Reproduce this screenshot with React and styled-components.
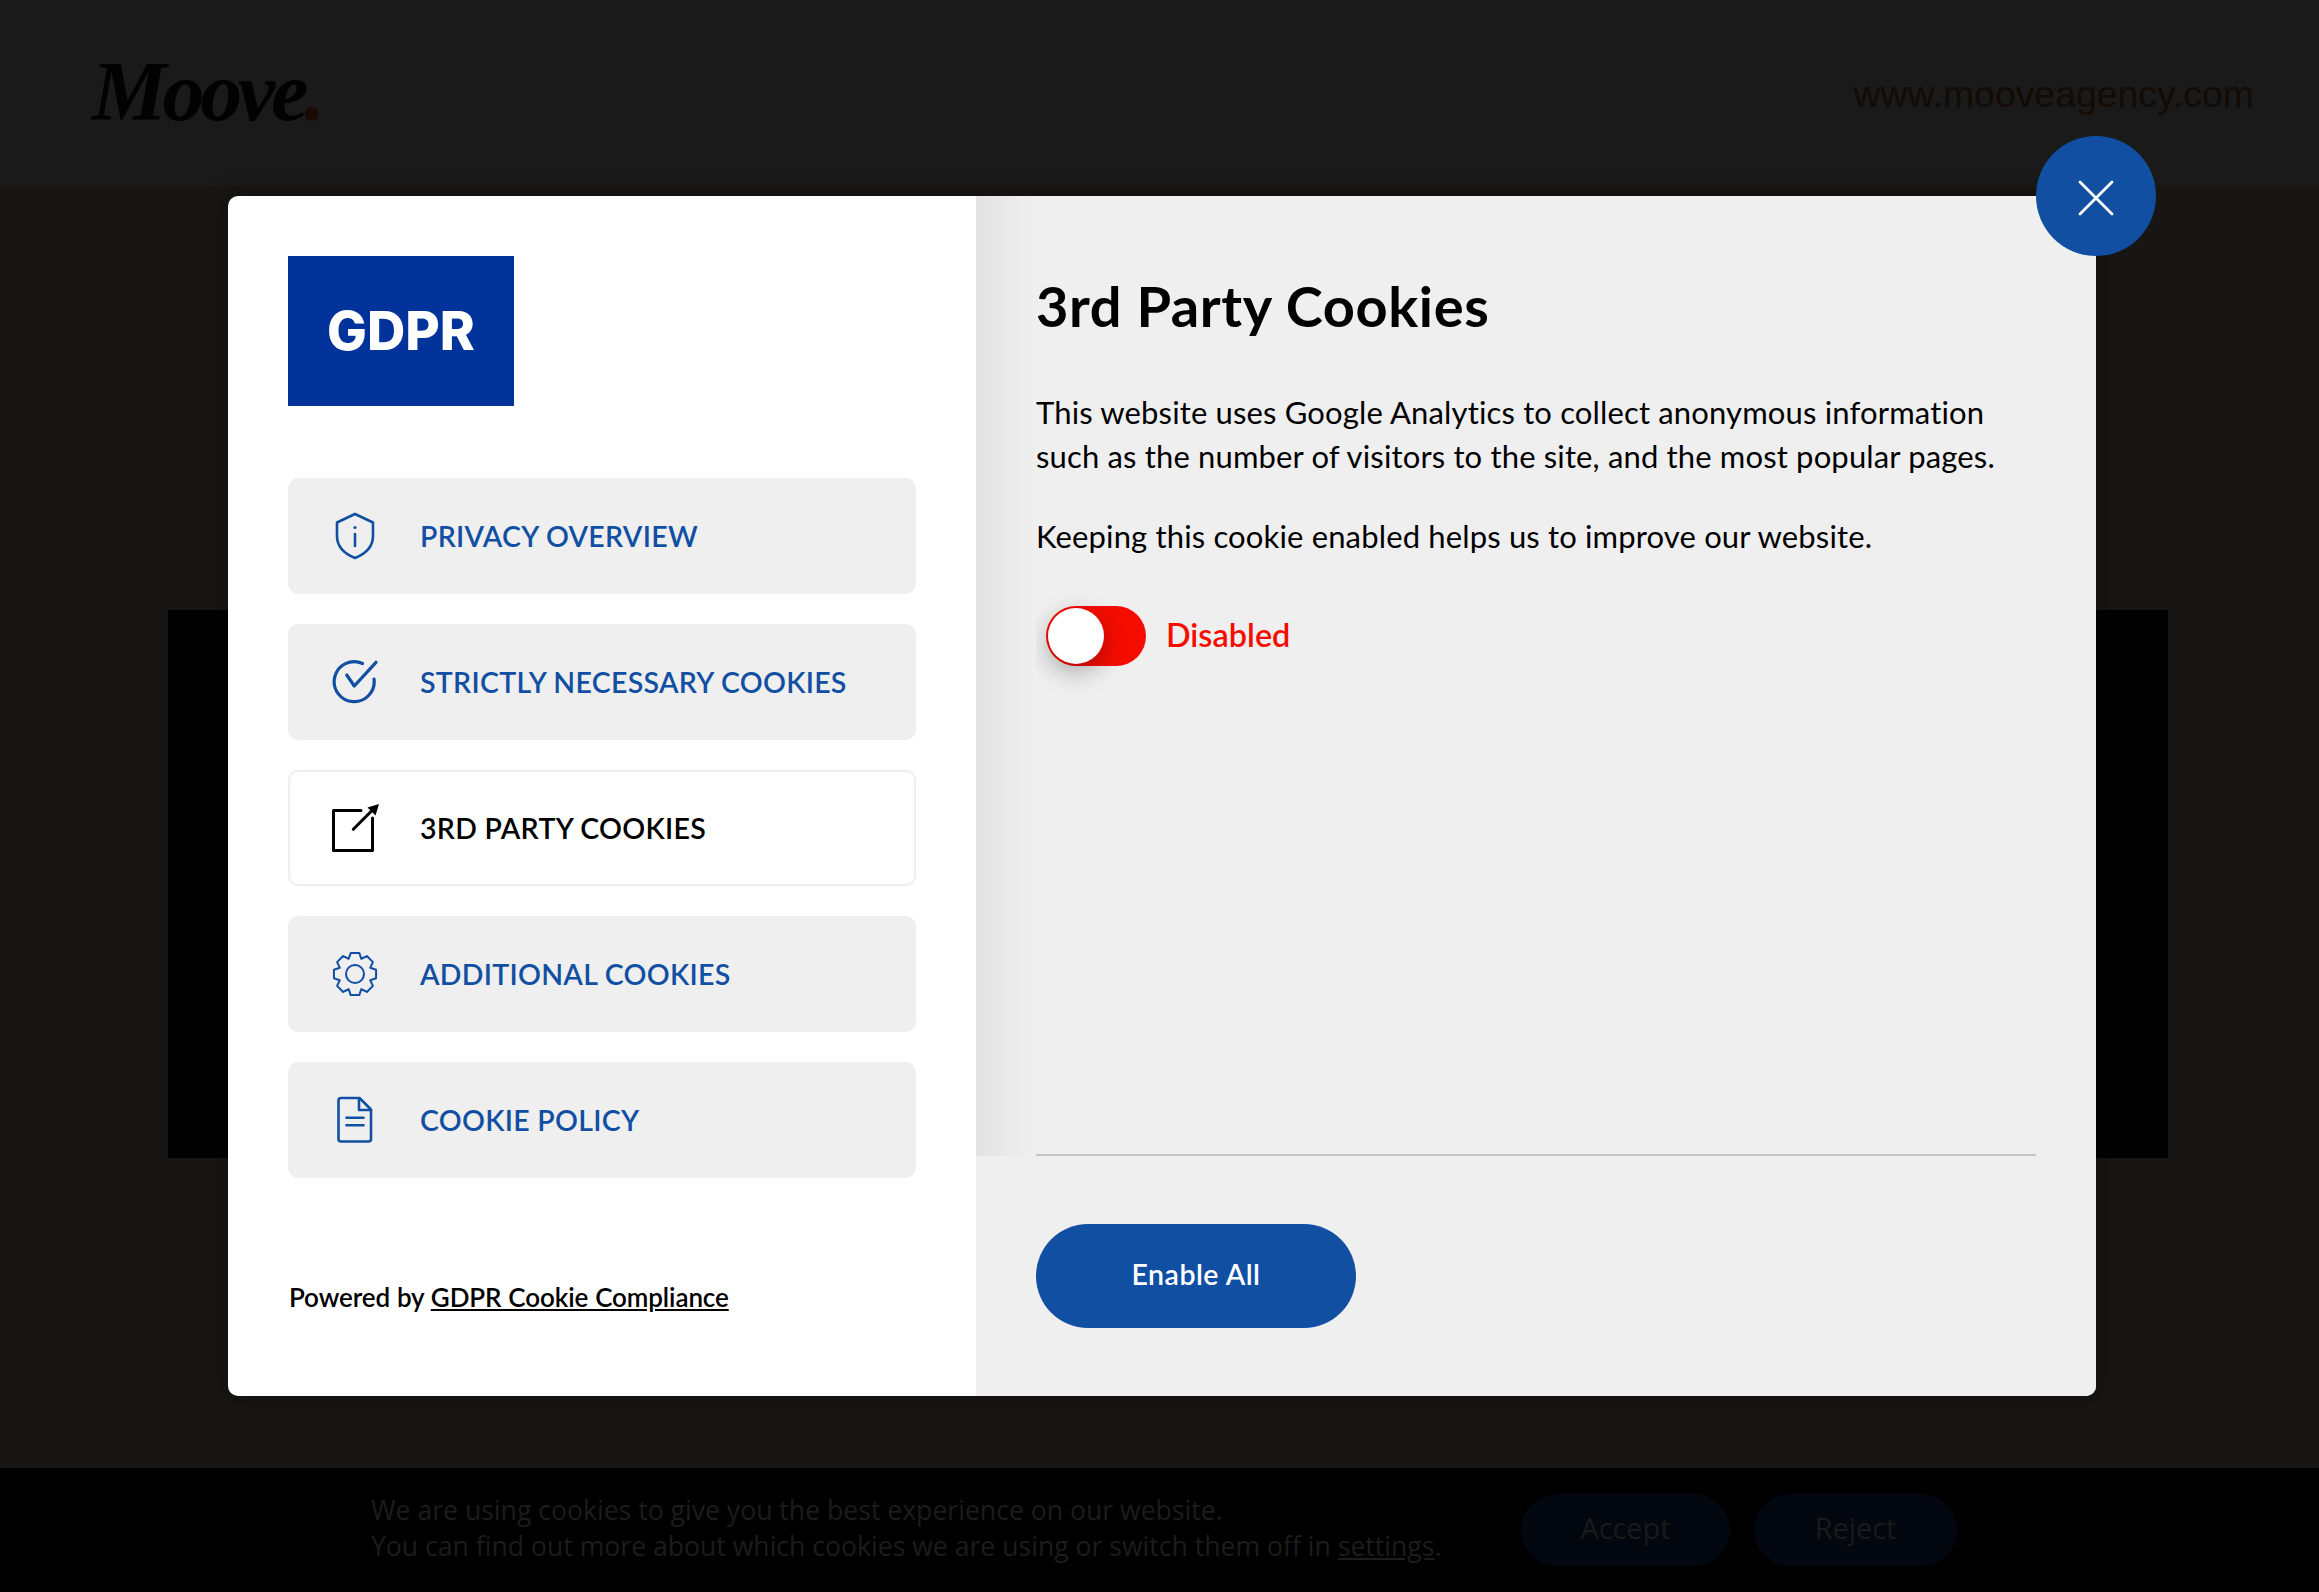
import React from 'react';
import styled, { createGlobalStyle } from 'styled-components';

const BLUE = '#114fa3';
const UI_FONT = 'Lato, "Noto Sans", sans-serif';

const GlobalStyle = createGlobalStyle`
  html, body {
    margin: 0;
    padding: 0;
    background: #171614;
  }
  body {
    font-family: ${UI_FONT};
  }
`;

const Page = styled.div`
  position: relative;
  width: 2319px;
  height: 1592px;
  overflow: hidden;
  background: #171614;
`;

const Header = styled.header`
  height: 186px;
  padding: 0 65px 0 92px;
  box-sizing: border-box;
  background: #1a1a1a;
  display: flex;
  justify-content: space-between;
  align-items: flex-start;
`;

const Brand = styled.div`
  margin-top: 44px;
  font-family: "Liberation Serif", serif;
  font-style: italic;
  font-weight: 700;
  font-size: 84px;
  line-height: 96px;
  letter-spacing: -4.2px;
  color: #020202;
  span {
    color: #1a0a03;
  }
`;

const SiteUrl = styled.div`
  margin-top: 71px;
  font-family: "Liberation Sans", sans-serif;
  font-size: 37.4px;
  line-height: 46px;
  color: #130b05;
`;

const Hero = styled.div`
  width: 2000px;
  height: 548px;
  margin: 424px 0 310px 168px;
  background: #000;
`;

const CookieBar = styled.div`
  height: 124px;
  padding-left: 371px;
  background: #000;
  display: flex;
  align-items: center;
  font-family: "Open Sans", sans-serif;
  color: #1c1c1c;
`;

const CookieText = styled.div`
  width: 1150px;
  font-size: 26.6px;
  line-height: 36px;
  margin-top: -5px;
  a {
    color: inherit;
  }
`;

const BarButtons = styled.div`
  display: flex;
  gap: 24px;
`;

const BarButton = styled.div`
  width: ${p => p.$w}px;
  height: 72px;
  border-radius: 36px;
  background: #020710;
  color: #1a1a1a;
  font-size: 28.8px;
  padding-bottom: 6px;
  box-sizing: border-box;
  display: flex;
  align-items: center;
  justify-content: center;
`;

const Overlay = styled.div`
  position: absolute;
  top: 196px;
  left: 228px;
`;

const Modal = styled.div`
  position: relative;
  width: 1868px;
  height: 1200px;
  display: flex;
  border-radius: 10px;
  box-shadow: 0 0 24px rgba(0, 0, 0, 0.35);
`;

const Sidebar = styled.aside`
  width: 748px;
  box-sizing: border-box;
  padding: 60px 60px 0;
  background: #fff;
  border-radius: 10px 0 0 10px;
  display: flex;
  flex-direction: column;
`;

const Logo = styled.div`
  width: 226px;
  height: 150px;
  background: #02339b;
  color: #fff;
  font-family: Inter, sans-serif;
  font-weight: 800;
  font-size: 53px;
  display: flex;
  align-items: center;
  justify-content: center;
`;

const Nav = styled.nav`
  margin-top: 72px;
  display: flex;
  flex-direction: column;
  gap: 30px;
`;

const NavItem = styled.div`
  height: 116px;
  box-sizing: border-box;
  border-radius: 10px;
  display: flex;
  align-items: center;
  gap: 41px;
  background: ${p => (p.$active ? '#fff' : '#efefef')};
  border: ${p => (p.$active ? '2px solid #efefef' : 'none')};
  padding-left: ${p => (p.$active ? '41px' : '43px')};
  color: ${p => (p.$active ? '#000' : BLUE)};
  svg {
    flex: none;
  }
`;

const NavLabel = styled.span`
  font-size: 28.5px;
  font-weight: 600;
  letter-spacing: 0.28px;
`;

const Powered = styled.div`
  margin-top: 101px;
  padding-left: 1px;
  font-size: 26px;
  line-height: 36px;
  font-weight: 600;
  letter-spacing: -0.1px;
  word-spacing: 0.5px;
  color: #000;
  a {
    color: inherit;
    text-decoration: underline;
  }
`;

const Panel = styled.section`
  flex: 1;
  display: flex;
  flex-direction: column;
  border-radius: 0 10px 10px 0;
  background: #efefef;
`;

const PanelMain = styled.div`
  height: 960px;
  padding: 0 60px;
  background: linear-gradient(90deg, #e3e3e3, #efefef 58px);
  border-radius: 0 10px 0 0;
  display: flex;
`;

const PanelContent = styled.div`
  flex: 1;
  overflow: hidden;
  border-bottom: 2px solid #c6c6c6;
`;

const Title = styled.h1`
  margin: 77px 0 0;
  font-size: 56px;
  line-height: 66px;
  font-weight: 700;
  letter-spacing: 0.6px;
  color: #000;
`;

const Copy = styled.p`
  margin: ${p => (p.$first ? '51px' : '36px')} 0 0;
  font-size: 31px;
  line-height: 44px;
  letter-spacing: 0.15px;
  color: #000;
`;

const ToggleRow = styled.div`
  margin-top: 48px;
  padding-left: 10px;
  display: flex;
  align-items: center;
  gap: 20px;
  padding-bottom: 40px;
`;

const Track = styled.div`
  position: relative;
  width: 100px;
  height: 60px;
  border-radius: 30px;
  background: #f60d00;
`;

const Knob = styled.div`
  position: absolute;
  top: 2px;
  left: 2px;
  width: 56px;
  height: 56px;
  border-radius: 50%;
  background: #fff;
  box-shadow: 0 8px 24px rgba(0, 0, 0, 0.3);
`;

const ToggleLabel = styled.span`
  margin-top: -3px;
  font-size: 32.4px;
  font-weight: 600;
  color: #f60d00;
`;

const PanelFooter = styled.div`
  flex: 1;
  padding: 68px 60px 0;
  border-radius: 10px 0 10px 0;
  background: #efefef;
`;

const EnableButton = styled.div`
  width: 320px;
  height: 104px;
  box-sizing: border-box;
  padding-bottom: 5px;
  border-radius: 52px;
  background: ${BLUE};
  color: #fff;
  font-size: 28.5px;
  font-weight: 600;
  letter-spacing: 0.5px;
  display: flex;
  align-items: center;
  justify-content: center;
`;

const CloseButton = styled.div`
  position: absolute;
  top: -60px;
  right: -60px;
  width: 120px;
  height: 120px;
  box-sizing: border-box;
  padding-top: 3px;
  border-radius: 50%;
  background: ${BLUE};
  display: flex;
  align-items: center;
  justify-content: center;
`;

// cog outline with 8 teeth, top tooth on the vertical axis
const gearPath = () => {
  const pts = [];
  for (let i = 0; i < 8; i++) {
    const a = (i * Math.PI) / 4 - Math.PI / 2;
    [[-0.39, 16.5], [-0.2, 21.5], [0.2, 21.5], [0.39, 16.5]].forEach(([d, r]) => {
      pts.push(`${(24 + r * Math.cos(a + d)).toFixed(2)} ${(24 + r * Math.sin(a + d)).toFixed(2)}`);
    });
  }
  return `M${pts.join('L')}Z`;
};

const Icon = ({ children, strokeWidth = 2.4 }) => (
  <svg
    width="48"
    height="48"
    viewBox="0 0 48 48"
    fill="none"
    stroke="currentColor"
    strokeWidth={strokeWidth}
    strokeLinecap="round"
    strokeLinejoin="round"
  >
    {children}
  </svg>
);

const ShieldIcon = () => (
  <Icon strokeWidth={2.6}>
    <path d="M24 2 L6 10.5 V24 C6 35 14 42 24 46 C34 42 42 35 42 24 V10.5 Z" />
    <path d="M24 22 V34" />
    <circle cx="24" cy="15.5" r="1.6" fill="currentColor" stroke="none" />
  </Icon>
);

const CheckIcon = () => (
  <Icon strokeWidth={3.2}>
    <path d="M31.5 5.5 A20 20 0 1 0 43 21" />
    <path d="M15.7 17 L23.3 28 L45 4.3" />
  </Icon>
);

const ExternalIcon = () => (
  <Icon strokeWidth={3}>
    <path d="M30 6.5 H2.5 V46.5 H41.5 V14" />
    <path d="M22.3 25.3 L42 5.5" />
    <path d="M48 0 L36.5 3.5 L44.5 11.5 Z" fill="currentColor" stroke="none" />
  </Icon>
);

const GearIcon = () => (
  <Icon strokeWidth={2}>
    <path d={gearPath()} />
    <circle cx="24" cy="24" r="9" />
  </Icon>
);

const DocIcon = () => (
  <Icon strokeWidth={2.6}>
    <path d="M10 2 H28.5 L40 13.5 V43 A2.5 2.5 0 0 1 37.5 45.5 H10 A2.5 2.5 0 0 1 7.5 43 V4.5 A2.5 2.5 0 0 1 10 2 Z" />
    <path d="M28 2.5 V14 H40" />
    <path d="M15.5 21.7 H32.5 M15.5 29.3 H32.5" />
  </Icon>
);

const navItems = [
  { label: 'PRIVACY OVERVIEW', icon: <ShieldIcon /> },
  { label: 'STRICTLY NECESSARY COOKIES', icon: <CheckIcon /> },
  { label: '3RD PARTY COOKIES', icon: <ExternalIcon />, active: true },
  { label: 'ADDITIONAL COOKIES', icon: <GearIcon /> },
  { label: 'COOKIE POLICY', icon: <DocIcon /> },
];

export default function App() {
  return (
    <Page>
      <GlobalStyle />
      <Header>
        <Brand>Moove<span>.</span></Brand>
        <SiteUrl>www.mooveagency.com</SiteUrl>
      </Header>
      <Hero />
      <CookieBar>
        <CookieText>
          We are using cookies to give you the best experience on our website.
          <br />
          You can find out more about which cookies we are using or switch them off in <a href="#settings">settings</a>.
        </CookieText>
        <BarButtons>
          <BarButton $w={209}>Accept</BarButton>
          <BarButton $w={203}>Reject</BarButton>
        </BarButtons>
      </CookieBar>

      <Overlay>
        <Modal>
          <Sidebar>
            <Logo>GDPR</Logo>
            <Nav>
              {navItems.map(item => (
                <NavItem key={item.label} $active={item.active}>
                  {item.icon}
                  <NavLabel>{item.label}</NavLabel>
                </NavItem>
              ))}
            </Nav>
            <Powered>
              Powered by <a href="#gdpr">GDPR Cookie Compliance</a>
            </Powered>
          </Sidebar>
          <Panel>
            <PanelMain>
              <PanelContent>
                <Title>3rd Party Cookies</Title>
                <Copy $first>
                  This website uses Google Analytics to collect anonymous information
                  <br />
                  such as the number of visitors to the site, and the most popular pages.
                </Copy>
                <Copy>Keeping this cookie enabled helps us to improve our website.</Copy>
                <ToggleRow>
                  <Track>
                    <Knob />
                  </Track>
                  <ToggleLabel>Disabled</ToggleLabel>
                </ToggleRow>
              </PanelContent>
            </PanelMain>
            <PanelFooter>
              <EnableButton>Enable All</EnableButton>
            </PanelFooter>
          </Panel>
          <CloseButton>
            <svg width="40" height="40" viewBox="0 0 40 40" stroke="#fff" strokeWidth="2.8" strokeLinecap="round">
              <path d="M4 4 L36 36 M36 4 L4 36" />
            </svg>
          </CloseButton>
        </Modal>
      </Overlay>
    </Page>
  );
}
